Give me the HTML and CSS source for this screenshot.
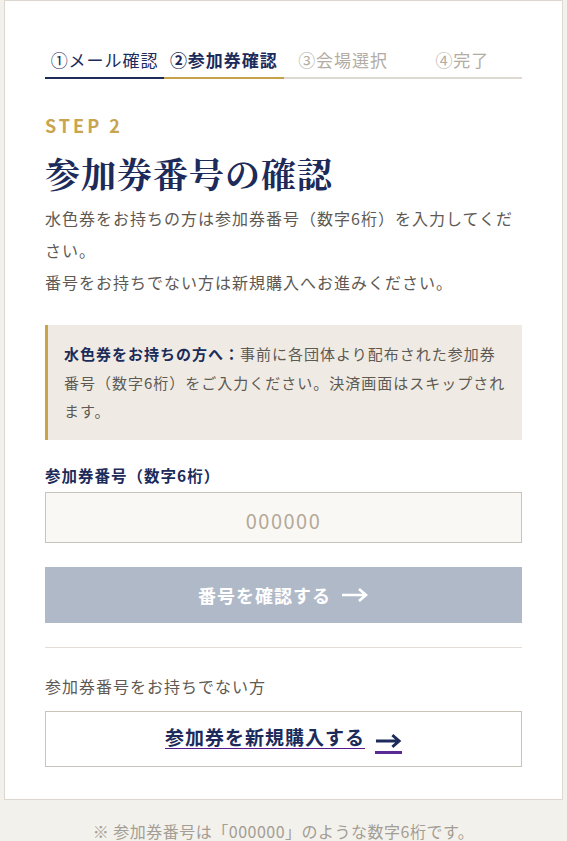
FILE: index.html
```html
<!DOCTYPE html>
<html lang="ja">
  <head>
    <meta charset="UTF-8" />
    <meta name="viewport" content="width=device-width, initial-scale=1.0" />
    <title>参加券番号の確認</title>
    <link rel="stylesheet" href="styles.css">
  </head>
  <body>
    <div class="page">
      <div class="card">
        <ol class="steps">
          <li class="step done">①メール確認</li>
          <li class="step current">②参加券確認</li>
          <li class="step">③会場選択</li>
          <li class="step">④完了</li>
        </ol>

        <p class="step-label">STEP 2</p>
        <h1 class="title">参加券番号の確認</h1>
        <p class="lead">
          水色券をお持ちの方は参加券番号（数字6桁）を入力してください。<br />
          番号をお持ちでない方は新規購入へお進みください。
        </p>

        <div class="notice">
          <strong>水色券をお持ちの方へ：</strong>事前に各団体より配布された参加券番号（数字6桁）をご入力ください。決済画面はスキップされます。
        </div>

        <form class="ticket-form">
          <label class="field-label" for="ticket">参加券番号（数字6桁）</label>
          <input class="ticket-input" id="ticket" type="text" inputmode="numeric" maxlength="6" placeholder="000000" />
          <button class="btn-confirm" type="button" disabled>
            番号を確認する
            <svg class="arrow" viewBox="0 0 28 16" width="28" height="16">
              <path d="M1 8h24M18 2l7 6-7 6" fill="none" stroke="currentColor" stroke-width="2.6" />
            </svg>
          </button>
        </form>

        <hr class="divider" />

        <p class="no-ticket">参加券番号をお持ちでない方</p>
        <div class="buy-box">
          <a class="buy-link" href="#buy"><span class="buy-text">参加券を新規購入する</span><span class="buy-arrow"><svg viewBox="0 0 28 16" width="27" height="16">
                <path d="M1 8h24M18 2l7 6-7 6" fill="none" stroke="currentColor" stroke-width="3" />
              </svg></span></a>
        </div>
      </div>

      <p class="footnote">※ 参加券番号は「000000」のような数字6桁です。</p>
    </div>
  </body>
</html>
```

FILE: styles.css
```css
* {
  box-sizing: border-box;
}

body {
  margin: 0;
  background: #f3f1ec;
  font-family: "Noto Sans CJK JP", "Noto Sans", sans-serif;
  color: #5e5953;
}

.page {
  padding: 0 4px;
}

.card {
  background: #fff;
  border: 1px solid #dcd8d0;
  padding: 47px 40px 32px;
}

/* progress tabs */
.steps {
  list-style: none;
  margin: 0;
  padding: 0;
  display: grid;
  grid-template-columns: repeat(4, 1fr);
}

.step {
  text-align: center;
  font-size: 17px;
  line-height: 24px;
  letter-spacing: 1px;
  padding-bottom: 5px;
  color: #b2aca2;
  border-bottom: 2px solid #dedad2;
}

.step.done {
  color: #1c2b5a;
  border-bottom-color: #1c2b5a;
}

.step.current {
  color: #1c2b5a;
  font-weight: 700;
  border-bottom-color: #c6a24c;
}

.step-label {
  margin: 33px 0 0;
  font-size: 18px;
  line-height: 27px;
  font-weight: 700;
  letter-spacing: 3px;
  color: #c8a54e;
}

.title {
  margin: 10px 0 0;
  font-family: "Noto Serif CJK JP", "Liberation Serif", serif;
  font-size: 35px;
  line-height: 48px;
  font-weight: 700;
  letter-spacing: 1px;
  color: #1c2b5a;
}

.lead {
  margin: 5px 0 0;
  font-size: 16px;
  line-height: 32px;
  letter-spacing: 1px;
}

.notice {
  margin-top: 27px;
  background: #efebe4;
  border-left: 3px solid #c8a44a;
  padding: 15px 14px 14px 16px;
  font-size: 15px;
  line-height: 28.5px;
  letter-spacing: 1px;
}

.notice strong {
  color: #1c2b5a;
}

.ticket-form {
  display: flex;
  flex-direction: column;
  margin-top: 23px;
}

.field-label {
  font-size: 15.5px;
  line-height: 24px;
  font-weight: 700;
  letter-spacing: 1px;
  color: #1c2b5a;
}

.ticket-input {
  margin-top: 5px;
  height: 51px;
  padding: 6px 0 0;
  border: 1px solid #c9c4ba;
  background: #f9f8f5;
  text-align: center;
  font-family: inherit;
  font-size: 20px;
  letter-spacing: 1.5px;
  color: #1c2b5a;
}

.ticket-input::placeholder {
  color: #b5a897;
}

.btn-confirm {
  margin-top: 24px;
  height: 56px;
  border: none;
  background: #b0b9c8;
  color: #fff;
  font-family: inherit;
  font-size: 18px;
  font-weight: 700;
  letter-spacing: 1px;
  display: flex;
  align-items: center;
  justify-content: center;
  gap: 10px;
}

.divider {
  margin: 24px 0 0;
  border: none;
  border-top: 1px solid #e2ded7;
}

.no-ticket {
  margin: 26px 0 0;
  font-size: 16px;
  line-height: 24px;
  letter-spacing: 1px;
}

.buy-box {
  margin-top: 13px;
  height: 56px;
  border: 1px solid #c9c4ba;
  display: flex;
  align-items: center;
  justify-content: center;
}

.buy-link {
  color: #551a8b;
  font-size: 19px;
  font-weight: 700;
  letter-spacing: 1px;
  text-underline-offset: 3px;
}

.buy-text {
  color: #1c2b5a;
}

.buy-arrow {
  display: inline-block;
  margin-left: 10px;
  padding-bottom: 2px;
  color: #1c2b5a;
  border-bottom: 3px solid #5b2a94;
  vertical-align: -4px;
  line-height: 0;
}

.footnote {
  margin: 19px 0 0;
  text-align: center;
  font-size: 16px;
  line-height: 24px;
  letter-spacing: 0.5px;
  color: #a39d93;
}
```
